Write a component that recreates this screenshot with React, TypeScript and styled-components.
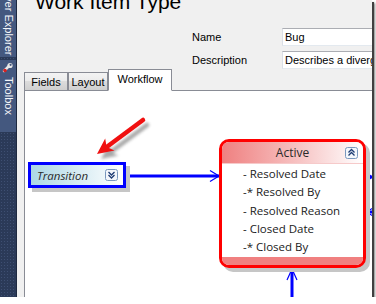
import React from "react";
import styled, { createGlobalStyle } from "styled-components";

const GlobalStyle = createGlobalStyle`
  html, body { margin: 0; padding: 0; background: #ffffff; }
  body { font-family: "Liberation Sans", Arial, sans-serif; }
  * { box-sizing: border-box; }
`;

const Frame = styled.div`
  width: 372px;
  height: 297px;
  display: flex;
  overflow: hidden;
  background: #f0f0f0;
  box-shadow: 2px 2px 0 #404040, 3px 3px 2px rgba(0, 0, 0, 0.5);
`;

const Sidebar = styled.div`
  flex: none;
  width: 17px;
  display: flex;
  flex-direction: column;
  gap: 3px;
  background-color: #2b3a58;
  background-image: radial-gradient(circle, #3e4f72 0.7px, transparent 1px);
  background-size: 3px 3px;
  border-right: 1px solid #1e2940;
`;

const SideTab = styled.div<{ $h: number; $justify: string }>`
  flex: none;
  height: ${(p) => p.$h}px;
  display: flex;
  flex-direction: column;
  align-items: center;
  justify-content: ${(p) => p.$justify};
  gap: 3px;
  padding: 2px 0;
  overflow: hidden;
  background: #44587f;
  color: #f4f6fa;
  font: 11px "Liberation Sans", Arial, sans-serif;
`;

const SideLabel = styled.span`
  writing-mode: vertical-rl;
  white-space: nowrap;
  line-height: 15px;
`;

const Main = styled.div`
  flex: 1;
  min-width: 0;
  display: flex;
  flex-direction: column;
`;

const Header = styled.div`
  flex: none;
  height: 69px;
  display: flex;
  flex-direction: column;
`;

const Title = styled.h1`
  margin: -10px 0 0 18px;
  font: 400 21px/24px "Liberation Sans", Arial, sans-serif;
  color: #000;
  white-space: nowrap;
`;

const Form = styled.div`
  margin: 14px 0 0 175px;
  display: grid;
  grid-template-columns: 90px 120px;
  row-gap: 5px;
  align-items: center;
`;

const Label = styled.span`
  font: 11px/14px "Liberation Sans", Arial, sans-serif;
  color: #000;
  white-space: nowrap;
`;

const Field = styled.div`
  height: 18px;
  padding: 0 2px;
  background: #fff;
  border: 1px solid;
  border-color: #abadb3 #e2e3ea #e3e9ef #dbdfe6;
  font: 11px/16px "Liberation Sans", Arial, sans-serif;
  color: #000;
  white-space: nowrap;
  overflow: hidden;
`;

const TabStrip = styled.div`
  flex: none;
  height: 22px;
  margin-left: 7px;
  display: flex;
  align-items: flex-end;
  border-bottom: 1px solid #898c95;
`;

const Tab = styled.div<{ $active?: boolean; $w: number }>`
  flex: none;
  width: ${(p) => p.$w}px;
  height: ${(p) => (p.$active ? 22 : 19)}px;
  margin-bottom: -1px;
  display: flex;
  align-items: center;
  justify-content: center;
  padding-bottom: ${(p) => (p.$active ? 3 : 0)}px;
  border: 1px solid #898c95;
  border-bottom-color: ${(p) => (p.$active ? "#ffffff" : "#898c95")};
  background: ${(p) =>
    p.$active
      ? "#ffffff"
      : "linear-gradient(#f3f3f3, #ebebeb 50%, #dcdcdc 50%, #cfcfcf)"};
  font: 11px "Liberation Sans", Arial, sans-serif;
  color: #000;
`;

const Canvas = styled.div`
  flex: 1;
  margin-left: 7px;
  position: relative;
  background: #fff;
  border-left: 1px solid #898c95;
  overflow: hidden;
`;

const WireLayer = styled.svg`
  position: absolute;
  left: 0;
  top: 0;
`;

const TransitionNode = styled.div`
  position: absolute;
  left: 3px;
  top: 71px;
  width: 98px;
  height: 26px;
  border: 3px solid #0000ff;
  background: linear-gradient(to right, #acd7e5, #ffffff);
  box-shadow: 4px 4px 0 #c6c6c6;
  display: flex;
  align-items: center;
  justify-content: space-between;
  padding: 0 5px 0 6px;
  font: italic 11.5px "Open Sans", "Noto Sans", sans-serif;
  color: #2a2a2a;
`;

const StateNode = styled.div`
  position: absolute;
  left: 194px;
  top: 48px;
  width: 147px;
  height: 129px;
  border: 3px solid #ff0000;
  border-radius: 10px;
  background: #fff;
  overflow: hidden;
  box-shadow: 4px 4px 0 #c6c6c6;
  display: flex;
  flex-direction: column;
`;

const StateHeader = styled.div`
  flex: none;
  height: 22px;
  display: grid;
  grid-template-columns: 1fr auto 1fr;
  align-items: center;
  padding: 0 5px;
  background: linear-gradient(to right, #ef8080, #f7c4c4 55%, #ffffff);
  border-bottom: 1px solid #f6caca;
  font: 12px "Open Sans", "Noto Sans", sans-serif;
  color: #2a2a2a;
`;

const HeaderIcon = styled.span`
  justify-self: end;
  display: flex;
`;

const StateBody = styled.div`
  flex: 1;
  padding: 1px 0 0 21px;
  display: flex;
  flex-direction: column;
`;

const FieldItem = styled.div`
  height: 18.3px;
  line-height: 18.3px;
  font: 11.5px/18.3px "Open Sans", "Noto Sans", sans-serif;
  color: #1a1a1a;
  white-space: nowrap;
`;

const StateFooter = styled.div`
  flex: none;
  height: 8px;
  background: #f08080;
`;

const ToggleIcon = ({ up }: { up?: boolean }) => (
  <svg width="13" height="12" viewBox="0 0 13 12">
    <rect x="0.5" y="0.5" width="12" height="11" rx="2" fill="#f3f6fb" stroke="#7a98be" />
    <path
      d={
        up
          ? "M3.5 5.5 L6.5 2.5 L9.5 5.5 M3.5 8.5 L6.5 5.5 L9.5 8.5"
          : "M3.5 3 L6.5 6 L9.5 3 M3.5 6 L6.5 9 L9.5 6"
      }
      stroke="#1d3b73"
      strokeWidth="1.3"
      fill="none"
    />
  </svg>
);

const ToolboxIcon = () => (
  <svg width="12" height="12" viewBox="0 0 12 12">
    <path d="M2 9 L7 4" stroke="#e8e8e8" strokeWidth="2.5" strokeLinecap="round" />
    <circle cx="8" cy="3.5" r="2.6" fill="#e8e8e8" />
    <circle cx="8.6" cy="2.8" r="1.1" fill="#44587f" />
    <circle cx="3" cy="8.5" r="1.8" fill="#d42020" />
  </svg>
);

const Wires = () => (
  <WireLayer width="350" height="210" viewBox="0 0 350 210">
    <defs>
      <filter id="arrowShadow" x="-20%" y="-20%" width="140%" height="140%">
        <feGaussianBlur stdDeviation="1.6" />
      </filter>
    </defs>
    {/* transition to Active */}
    <line x1="101" y1="85" x2="194" y2="85" stroke="#0000ff" strokeWidth="3" />
    <path d="M185 79.5 L194 85 L185 90.5" stroke="#0000ff" strokeWidth="1.2" fill="none" />
    {/* from below into Active */}
    <line x1="267" y1="177" x2="267" y2="210" stroke="#0000ff" strokeWidth="3" />
    <path d="M262 189 L267 178 L272 189" stroke="#0000ff" strokeWidth="1.2" fill="none" />
    {/* right side connections */}
    <line x1="345" y1="86" x2="350" y2="86" stroke="#0000ff" strokeWidth="3" />
    <path d="M343 81.5 L347.5 86 L343 90.5 L338.5 86 Z" fill="#0000ff" />
    <line x1="342" y1="121" x2="350" y2="121" stroke="#0000ff" strokeWidth="3" />
    <path d="M348 117 L341 121 L348 125" stroke="#0000ff" strokeWidth="1.2" fill="none" />
    {/* red annotation arrow */}
    <g transform="translate(4 5)" filter="url(#arrowShadow)" opacity="0.55">
      <line x1="118" y1="29" x2="83" y2="55" stroke="#606060" strokeWidth="4.5" strokeLinecap="round" />
      <path d="M72 63 L89.5 59.5 L81.6 55.9 L80.2 47.4 Z" fill="#606060" />
    </g>
    <line x1="118" y1="29" x2="83" y2="55" stroke="#f01010" strokeWidth="4.5" strokeLinecap="round" />
    <path d="M72 63 L89.5 59.5 L81.6 55.9 L80.2 47.4 Z" fill="#f01010" />
  </WireLayer>
);

const fields = ["- Resolved Date", "-* Resolved By", "- Resolved Reason", "- Closed Date", "-* Closed By"];

export default function App() {
  return (
    <>
      <GlobalStyle />
      <Frame>
        <Sidebar>
          <SideTab $h={57} $justify="flex-end">
            <SideLabel>Server Explorer</SideLabel>
          </SideTab>
          <SideTab $h={72} $justify="flex-start">
            <ToolboxIcon />
            <SideLabel>Toolbox</SideLabel>
          </SideTab>
        </Sidebar>
        <Main>
          <Header>
            <Title>Work Item Type</Title>
            <Form>
              <Label>Name</Label>
              <Field>Bug</Field>
              <Label>Description</Label>
              <Field>Describes a divergence between required and actual behavior</Field>
            </Form>
          </Header>
          <TabStrip>
            <Tab $w={44}>Fields</Tab>
            <Tab $w={40}>Layout</Tab>
            <Tab $w={64} $active>
              Workflow
            </Tab>
          </TabStrip>
          <Canvas>
            <Wires />
            <TransitionNode>
              <span>Transition</span>
              <ToggleIcon />
            </TransitionNode>
            <StateNode>
              <StateHeader>
                <span />
                <span>Active</span>
                <HeaderIcon>
                  <ToggleIcon up />
                </HeaderIcon>
              </StateHeader>
              <StateBody>
                {fields.map((f) => (
                  <FieldItem key={f}>{f}</FieldItem>
                ))}
              </StateBody>
              <StateFooter />
            </StateNode>
          </Canvas>
        </Main>
      </Frame>
    </>
  );
}
